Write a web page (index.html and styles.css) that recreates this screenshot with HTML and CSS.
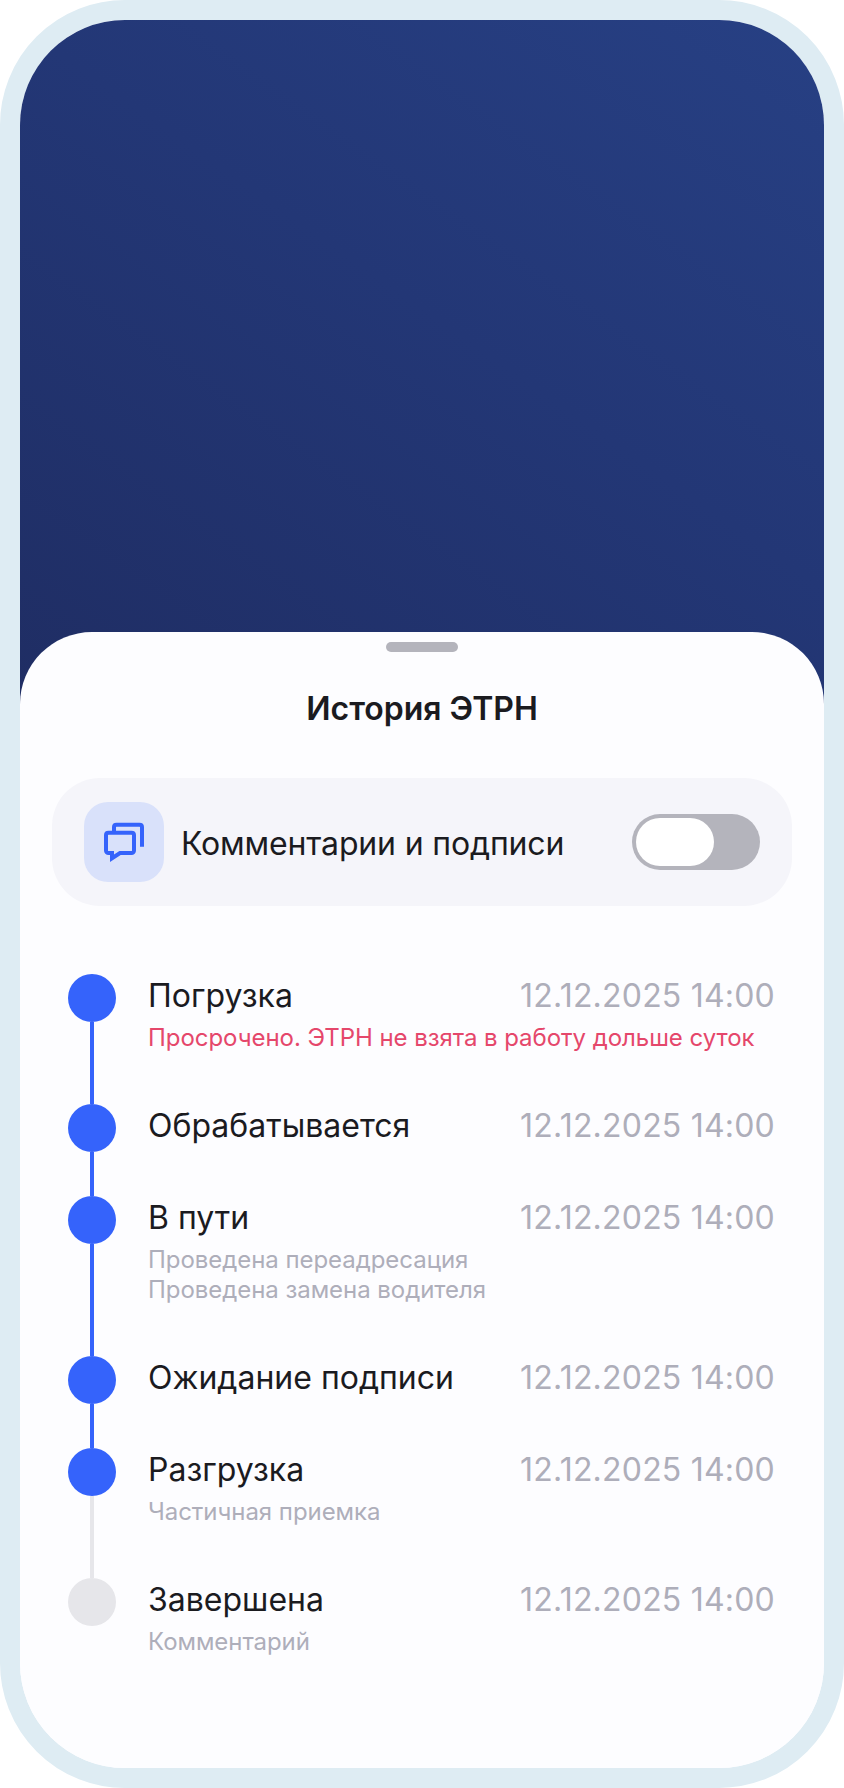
FILE: index.html
```html
<!DOCTYPE html>
<html lang="ru">
<head>
    <meta charset="UTF-8">
    <meta name="viewport" content="width=device-width, initial-scale=1.0">
    <title>История ЭТРН</title>
    <link rel="stylesheet" href="styles.css">
</head>
<body>

    <div class="phone">
        <div class="hero"></div>
        <div class="sheet">
            <div class="sheet-handle"></div>
            <h1 class="sheet-title">История ЭТРН</h1>

            <div class="comments-card">
                <div class="comments-icon">
                    <svg width="40" height="44" viewBox="0 0 40 44" fill="none">
                        <path d="M10 11V7C10 5.6 11.1 4.7 12.5 4.7H35.5C36.9 4.7 38 5.6 38 7V26.7" stroke="#3563fb" stroke-width="4"/>
                        <path d="M4.5 12.7H27.5C28.9 12.7 30 13.6 30 15V30.5C30 31.9 28.9 33 27.5 33H16L8 38.2V33H4.5C3.1 33 2 31.9 2 30.5V15C2 13.6 3.1 12.7 4.5 12.7Z" stroke="#3563fb" stroke-width="4"/>
                    </svg>
                </div>
                <span class="comments-label">Комментарии и подписи</span>
                <div class="toggle"><div class="toggle-knob"></div></div>
            </div>

            <div class="timeline">
                <div class="step step-done">
                    <div class="step-marker"><div class="step-dot"></div><div class="step-line"></div></div>
                    <div class="step-body">
                        <div class="step-head"><span class="step-name">Погрузка</span><span class="step-date">12.12.2025 14:00</span></div>
                        <p class="step-note step-note-error">Просрочено. ЭТРН не взята в работу дольше суток</p>
                    </div>
                </div>
                <div class="step step-done">
                    <div class="step-marker"><div class="step-dot"></div><div class="step-line"></div></div>
                    <div class="step-body">
                        <div class="step-head"><span class="step-name">Обрабатывается</span><span class="step-date">12.12.2025 14:00</span></div>
                    </div>
                </div>
                <div class="step step-done">
                    <div class="step-marker"><div class="step-dot"></div><div class="step-line"></div></div>
                    <div class="step-body">
                        <div class="step-head"><span class="step-name">В пути</span><span class="step-date">12.12.2025 14:00</span></div>
                        <p class="step-note">Проведена переадресация<br>Проведена замена водителя</p>
                    </div>
                </div>
                <div class="step step-done">
                    <div class="step-marker"><div class="step-dot"></div><div class="step-line"></div></div>
                    <div class="step-body">
                        <div class="step-head"><span class="step-name">Ожидание подписи</span><span class="step-date">12.12.2025 14:00</span></div>
                    </div>
                </div>
                <div class="step step-current">
                    <div class="step-marker"><div class="step-dot"></div><div class="step-line"></div></div>
                    <div class="step-body">
                        <div class="step-head"><span class="step-name">Разгрузка</span><span class="step-date">12.12.2025 14:00</span></div>
                        <p class="step-note">Частичная приемка</p>
                    </div>
                </div>
                <div class="step step-last">
                    <div class="step-marker"><div class="step-dot"></div></div>
                    <div class="step-body">
                        <div class="step-head"><span class="step-name">Завершена</span><span class="step-date">12.12.2025 14:00</span></div>
                        <p class="step-note">Комментарий</p>
                    </div>
                </div>
            </div>
        </div>
    </div>

</body>
</html>
```
FILE: styles.css
```css
* {
    box-sizing: border-box;
}

body {
    margin: 0;
    background-color: #fff;
    font-family: Inter, 'Noto Sans', sans-serif;
    color: #1b1b1f;
}

/* phone frame */
.phone {
    width: 844px;
    height: 1788px;
    border: 20px solid #deecf3;
    border-radius: 125px;
    overflow: hidden;
    background-color: #fdfdff;
}

.hero {
    height: 700px;
    background: linear-gradient(35deg, #1f2d63 0%, #233776 55%, #274084 100%);
}

/* bottom sheet */
.sheet {
    height: 1136px;
    margin-top: -88px;
    padding: 10px 32px 0;
    background-color: #fdfdff;
    border-radius: 72px 72px 0 0;
}

.sheet-handle {
    width: 72px;
    height: 10px;
    margin: 0 auto;
    background-color: #b4b4bc;
    border-radius: 5px;
}

.sheet-title {
    margin: 35px 0 47px;
    font-size: 32px;
    line-height: 44px;
    font-weight: 600;
    text-align: center;
}

/* comments toggle */
.comments-card {
    display: flex;
    align-items: center;
    height: 128px;
    padding: 0 32px;
    background-color: #f5f5fa;
    border-radius: 48px;
}

.comments-icon {
    display: flex;
    justify-content: center;
    align-items: center;
    width: 80px;
    height: 80px;
    background-color: #d9e1fa;
    border-radius: 24px;
}

.comments-label {
    flex: 1;
    margin-left: 17px;
    padding-top: 4px;
    font-size: 32px;
    line-height: 44px;
    letter-spacing: -0.16px;
}

.toggle {
    width: 128px;
    height: 56px;
    padding: 4px;
    background-color: #b4b4bc;
    border-radius: 28px;
}

.toggle-knob {
    width: 78px;
    height: 48px;
    background-color: #fff;
    border-radius: 24px;
}

/* history timeline */
.timeline {
    margin-top: 68px;
    padding-left: 16px;
}

.step {
    display: flex;
}

.step-marker {
    display: flex;
    flex-direction: column;
    align-items: center;
    width: 48px;
    flex-shrink: 0;
}

.step-dot {
    width: 48px;
    height: 48px;
    border-radius: 50%;
    background-color: #3563fb;
    flex-shrink: 0;
}

.step-line {
    width: 4px;
    flex: 1;
    background-color: #3563fb;
}

.step-current .step-line {
    background-color: #e6e6ea;
}

.step-last .step-dot {
    background-color: #e6e6ea;
}

.step-body {
    flex: 1;
    margin-left: 32px;
    padding-bottom: 50px;
}

.step-head {
    display: flex;
    justify-content: space-between;
    align-items: center;
    height: 42px;
    padding-right: 17px;
}

.step-name {
    font-size: 32px;
}

.step-date {
    font-size: 32px;
    letter-spacing: 0.2px;
    color: #aeaeba;
}

.step-note {
    margin: 7px 0 1px;
    font-size: 24px;
    line-height: 30px;
    letter-spacing: -0.05px;
    color: #aeaeba;
}

.step-note-error {
    color: #e5476b;
}
```
